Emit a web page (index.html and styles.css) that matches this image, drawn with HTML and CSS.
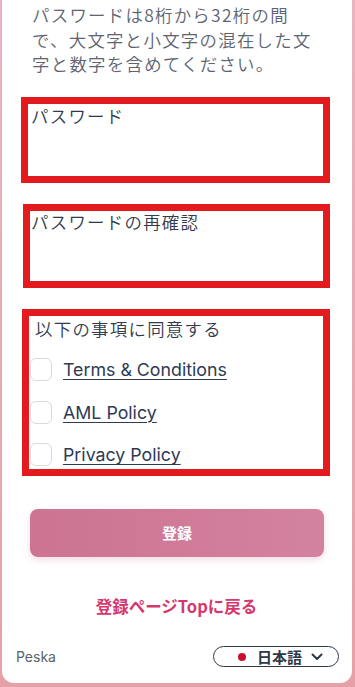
FILE: index.html
```html
<!DOCTYPE html>
<html lang="ja">
<head>
<meta charset="utf-8">
<title>Peska 登録</title>
<link rel="stylesheet" href="styles.css">
</head>
<body>
<div class="card">
  <p class="intro">パスワードは8桁から32桁の間で、大文字と小文字の混在した文字と数字を含めてください。</p>

  <div class="field field-pw">
    <label class="field-label">パスワード</label>
  </div>

  <div class="field field-confirm">
    <label class="field-label">パスワードの再確認</label>
  </div>

  <div class="field field-agree">
    <div class="agree-title">以下の事項に同意する</div>
    <div class="check-row"><span class="checkbox"></span><a class="policy" href="#">Terms &amp; Conditions</a></div>
    <div class="check-row"><span class="checkbox"></span><a class="policy" href="#">AML Policy</a></div>
    <div class="check-row"><span class="checkbox"></span><a class="policy" href="#">Privacy Policy</a></div>
  </div>

  <button class="submit" type="button">登録</button>

  <a class="back" href="#">登録ページTopに戻る</a>

  <div class="footer">
    <span class="brand">Peska</span>
    <div class="lang">
      <span class="dot"></span>
      <span class="lang-text">日本語</span>
      <svg class="chev" width="12" height="8" viewBox="0 0 12 8"><path d="M1.5 1.5 L6 6 L10.5 1.5" fill="none" stroke="#2d3748" stroke-width="2" stroke-linecap="round" stroke-linejoin="round"/></svg>
    </div>
  </div>
</div>
</body>
</html>
```

FILE: styles.css
```css
html, body {
  margin: 0;
  padding: 0;
}
body {
  background: linear-gradient(180deg, #eab3bf 0%, #e6a0a8 100%);
  width: 355px;
  height: 687px;
  overflow: hidden;
  font-family: "Noto Sans CJK JP", "Noto Sans", sans-serif;
}
.card {
  box-sizing: border-box;
  margin: 0 3px 0 2px;
  height: 683px;
  background: #fff;
  border-radius: 0 0 12px 12px;
  padding: 0 22px 0 19px;
  display: flex;
  flex-direction: column;
}
.intro {
  margin: 3px 0 0 11px;
  font-size: 17.4px;
  font-weight: 350;
  letter-spacing: 1.3px;
  line-height: 24.5px;
  color: #5d6371;
  width: 285px;
}
.field {
  border: 7px solid #e31b1f;
  box-sizing: border-box;
}
.field-label, .agree-title {
  display: block;
  font-size: 17.4px;
  font-weight: 350;
  letter-spacing: 1.3px;
  line-height: 22px;
  color: #323a4c;
}
.field-pw {
  margin: 20px 0 0 0;
  height: 86px;
  padding: 1px 0 0 3px;
}
.field-confirm {
  margin: 21px 0 0 2px;
  height: 84px;
  padding: 0 0 0 1px;
}
.field-agree {
  margin: 21px 0 0 1px;
  height: 167px;
  padding: 2px 0 0 1px;
}
.agree-title {
  padding-left: 5px;
}
.agree-title + .check-row {
  margin-top: 9px;
}
.check-row {
  display: flex;
  align-items: center;
  height: 42.5px;
}
.checkbox {
  box-sizing: border-box;
  width: 22px;
  height: 23px;
  border: 1px solid #dadada;
  border-radius: 6px;
  margin-right: 11px;
  flex: none;
}
.policy {
  font-family: "Inter", "Noto Sans", sans-serif;
  font-size: 17.8px;
  color: #2e3a56;
  text-decoration: underline;
  text-underline-offset: 3px;
  text-decoration-thickness: 1px;
}
.submit {
  margin: 33px 6px 0 9px;
  height: 48px;
  border: none;
  border-radius: 8px;
  background: linear-gradient(90deg, #cc7491 0%, #d382a0 100%);
  box-shadow: 0 3px 6px rgba(210, 120, 150, 0.25);
  color: #fff;
  font-family: "Noto Sans CJK JP", sans-serif;
  font-weight: 700;
  font-size: 15px;
}
.back {
  margin-top: 37px;
  align-self: center;
  margin-left: 2px;
  font-size: 16.5px;
  font-weight: 700;
  color: #d5376f;
  text-decoration: none;
  line-height: 24px;
}
.footer {
  margin: auto -9px 16px -5px;
  display: flex;
  justify-content: space-between;
  align-items: center;
}
.brand {
  font-family: "Inter", "Noto Sans", sans-serif;
  font-size: 14px;
  color: #5a5f6b;
}
.lang {
  box-sizing: border-box;
  width: 126px;
  height: 21px;
  border: 1.5px solid #2d3748;
  border-radius: 11px;
  display: flex;
  align-items: center;
  padding-left: 24px;
}
.dot {
  width: 8px;
  height: 8px;
  border-radius: 50%;
  background: #c8102e;
  margin-right: 11px;
}
.lang-text {
  font-size: 15px;
  font-weight: 700;
  color: #2d3748;
  line-height: 18px;
}
.chev {
  margin-left: 9px;
}
```
